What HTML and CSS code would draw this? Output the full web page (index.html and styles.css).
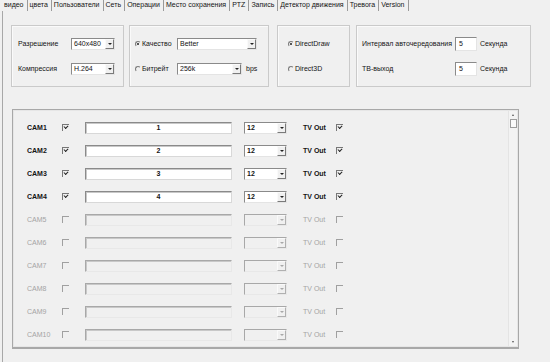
FILE: index.html
```html
<!DOCTYPE html>
<html lang="ru">
<head>
  <meta charset="UTF-8">
  <title>Настройки видео</title>
  <link rel="stylesheet" href="styles.css">
</head>
<body>
  <div class="tabs">
    <span class="tab active">видео</span>
    <span class="tab">цвета</span>
    <span class="tab">Пользователи</span>
    <span class="tab">Сеть</span>
    <span class="tab">Операции</span>
    <span class="tab">Место сохранения</span>
    <span class="tab">PTZ</span>
    <span class="tab">Запись</span>
    <span class="tab">Детектор движения</span>
    <span class="tab">Тревога</span>
    <span class="tab">Version</span>
  </div>

  <div class="frame">
    <div class="top-row">
      <div class="group g-res">
        <div class="line">
          <span class="lbl w53">Разрешение</span>
          <span class="select s44"><span class="val">640x480</span><span class="arrow"></span></span>
        </div>
        <div class="line">
          <span class="lbl w53">Компрессия</span>
          <span class="select s44"><span class="val">H.264</span><span class="arrow"></span></span>
        </div>
      </div>

      <div class="group g-quality">
        <div class="line">
          <span class="radio on"></span>
          <span class="lbl w35">Качество</span>
          <span class="select s80"><span class="val">Better</span><span class="arrow"></span></span>
        </div>
        <div class="line">
          <span class="radio"></span>
          <span class="lbl w35">Битрейт</span>
          <span class="select s65"><span class="val">256k</span><span class="arrow"></span></span>
          <span class="lbl unit">bps</span>
        </div>
      </div>

      <div class="group g-draw">
        <div class="line">
          <span class="radio on"></span>
          <span class="lbl">DirectDraw</span>
        </div>
        <div class="line">
          <span class="radio"></span>
          <span class="lbl">Direct3D</span>
        </div>
      </div>

      <div class="group g-time">
        <div class="line">
          <span class="lbl w93">Интервал авточередования</span>
          <span class="num">5</span>
          <span class="lbl unit">Секунда</span>
        </div>
        <div class="line">
          <span class="lbl w93">ТВ-выход</span>
          <span class="num">5</span>
          <span class="lbl unit">Секунда</span>
        </div>
      </div>
    </div>

    <div class="cams">
      <div class="cam-list">
        <div class="cam">
          <span class="cam-name">CAM1</span><span class="check on"></span>
          <span class="title">1</span>
          <span class="select s43"><span class="val">12</span><span class="arrow"></span></span>
          <span class="tv">TV Out</span><span class="check on"></span>
        </div>
        <div class="cam">
          <span class="cam-name">CAM2</span><span class="check on"></span>
          <span class="title">2</span>
          <span class="select s43"><span class="val">12</span><span class="arrow"></span></span>
          <span class="tv">TV Out</span><span class="check on"></span>
        </div>
        <div class="cam">
          <span class="cam-name">CAM3</span><span class="check on"></span>
          <span class="title">3</span>
          <span class="select s43"><span class="val">12</span><span class="arrow"></span></span>
          <span class="tv">TV Out</span><span class="check on"></span>
        </div>
        <div class="cam">
          <span class="cam-name">CAM4</span><span class="check on"></span>
          <span class="title">4</span>
          <span class="select s43"><span class="val">12</span><span class="arrow"></span></span>
          <span class="tv">TV Out</span><span class="check on"></span>
        </div>
        <div class="cam off">
          <span class="cam-name">CAM5</span><span class="check"></span>
          <span class="title"></span>
          <span class="select s43"><span class="val"></span><span class="arrow"></span></span>
          <span class="tv">TV Out</span><span class="check"></span>
        </div>
        <div class="cam off">
          <span class="cam-name">CAM6</span><span class="check"></span>
          <span class="title"></span>
          <span class="select s43"><span class="val"></span><span class="arrow"></span></span>
          <span class="tv">TV Out</span><span class="check"></span>
        </div>
        <div class="cam off">
          <span class="cam-name">CAM7</span><span class="check"></span>
          <span class="title"></span>
          <span class="select s43"><span class="val"></span><span class="arrow"></span></span>
          <span class="tv">TV Out</span><span class="check"></span>
        </div>
        <div class="cam off">
          <span class="cam-name">CAM8</span><span class="check"></span>
          <span class="title"></span>
          <span class="select s43"><span class="val"></span><span class="arrow"></span></span>
          <span class="tv">TV Out</span><span class="check"></span>
        </div>
        <div class="cam off">
          <span class="cam-name">CAM9</span><span class="check"></span>
          <span class="title"></span>
          <span class="select s43"><span class="val"></span><span class="arrow"></span></span>
          <span class="tv">TV Out</span><span class="check"></span>
        </div>
        <div class="cam off">
          <span class="cam-name">CAM10</span><span class="check"></span>
          <span class="title"></span>
          <span class="select s43"><span class="val"></span><span class="arrow"></span></span>
          <span class="tv">TV Out</span><span class="check"></span>
        </div>
      </div>

      <div class="scrollbar">
        <span class="sb-up"></span>
        <span class="sb-thumb"></span>
        <span class="sb-space"></span>
        <span class="sb-down"></span>
      </div>
    </div>
  </div>
</body>
</html>
```

FILE: styles.css
```css
* {
  box-sizing: border-box;
}

body {
  margin: 0;
  width: 550px;
  height: 362px;
  overflow: hidden;
  background-color: #f0f0f0;
  font-family: "Liberation Sans", Arial, sans-serif;
  font-size: 7px;
  color: #141414;
}

/* tabs */

.tabs {
  display: flex;
  height: 11px;
  padding-left: 2px;
  align-items: stretch;
}

.tab {
  padding: 0 3px 0 2px;
  line-height: 10px;
  border-right: 1px solid #9a9a9a;
  white-space: nowrap;
}

.frame {
  margin-left: 2px;
  height: 351px;
  border-left: 1px solid #a8a8a8;
  padding: 14px 0 0 8px;
}

/* top groups */

.top-row {
  display: flex;
}

.group {
  height: 62px;
  border: 1px solid #cacaca;
  box-shadow: inset 1px 1px 0 #fafafa;
  display: flex;
  flex-direction: column;
  gap: 12px;
  padding-top: 11px;
}

.g-res {
  width: 113px;
  padding-left: 6px;
}

.g-quality {
  width: 140px;
  margin-left: 5px;
  padding-left: 5px;
}

.g-draw {
  width: 73px;
  margin-left: 8px;
  padding-left: 10px;
}

.g-time {
  width: 175px;
  margin-left: 6px;
  padding-left: 5px;
}

.line {
  display: flex;
  align-items: center;
  height: 13px;
  white-space: nowrap;
}

.lbl {
  flex: none;
}

.w53 { width: 53px; }
.w35 { width: 35px; }
.w93 { width: 93px; }

.unit {
  margin-left: 4px;
}

.g-time .unit {
  margin-left: 3px;
}

/* controls */

.select {
  display: flex;
  flex: none;
  height: 12px;
  background-color: #fff;
  border: 1px solid;
  border-color: #8a8a8a #e4e4e4 #e4e4e4 #8a8a8a;
}

.s44 { width: 44px; }
.s80 { width: 80px; }
.s65 { width: 65px; }
.s43 { width: 43px; }

.val {
  flex: 1;
  padding-left: 2px;
  line-height: 10px;
}

.arrow {
  width: 9px;
  border: 1px solid;
  border-color: #fafafa #7a7a7a #7a7a7a #fafafa;
  background-color: #f0f0f0;
  display: flex;
  align-items: center;
  justify-content: center;
}

.arrow::after {
  content: "";
  border-left: 2px solid transparent;
  border-right: 2px solid transparent;
  border-top: 2px solid #222;
}

.num {
  flex: none;
  width: 22px;
  height: 14px;
  padding: 1px 0 0 3px;
  background-color: #fff;
  border: 1px solid;
  border-color: #8a8a8a #e4e4e4 #e4e4e4 #8a8a8a;
  line-height: 9px;
}

.radio {
  flex: none;
  width: 6px;
  height: 6px;
  margin-right: 1px;
  border-radius: 50%;
  border: 1px solid;
  border-color: #7a7a7a transparent transparent #7a7a7a;
  display: flex;
  align-items: center;
  justify-content: center;
}

.radio.on::after {
  content: "";
  width: 2px;
  height: 2px;
  border-radius: 50%;
  background-color: #222;
}

.check {
  flex: none;
  width: 7px;
  height: 7px;
  border-top: 1px solid #777;
  border-left: 1px solid #777;
  position: relative;
}

.check.on::after {
  content: "";
  position: absolute;
  left: 1px;
  top: 0;
  width: 3px;
  height: 2px;
  border-left: 1px solid #222;
  border-bottom: 1px solid #222;
  transform: rotate(-45deg);
}

/* camera list */

.cams {
  display: flex;
  width: 507px;
  height: 240px;
  margin: 22px 0 0 1px;
  border: 1px solid #a8a8a8;
  border-bottom-width: 2px;
  box-shadow: inset 0 0 0 1px #e6e6e6;
}

.cam-list {
  flex: 1;
  padding: 6px 0 0 14px;
}

.cam {
  display: flex;
  align-items: center;
  height: 23px;
  font-weight: bold;
}

.cam-name {
  width: 35px;
}

.title {
  width: 147px;
  height: 12px;
  margin: 0 12px 0 16px;
  text-align: center;
  line-height: 9px;
  background-color: #fff;
  border: 1px solid;
  border-color: #8a8a8a #d8d8d8 #d8d8d8 #8a8a8a;
  box-shadow: inset 1px 1px 0 #c8c8c8;
}

.tv {
  width: 33px;
  margin-left: 16px;
}

.cam.off {
  font-weight: normal;
  color: #a4a4a4;
}

.cam.off .check {
  border-color: #a0a0a0;
}

.cam.off .title,
.cam.off .select {
  background-color: #f0f0f0;
  border-color: #a8a8a8 #e8e8e8 #e8e8e8 #a8a8a8;
}

.cam.off .arrow {
  border-color: #fafafa #b0b0b0 #b0b0b0 #fafafa;
}

.cam.off .arrow::after {
  border-top-color: #a8a8a8;
}

/* scrollbar */

.scrollbar {
  width: 9px;
  margin: 1px 1px 1px 0;
  border-left: 1px solid #e4e4e4;
  background-color: #f3f3f3;
  display: flex;
  flex-direction: column;
  align-items: center;
}

.sb-up,
.sb-down {
  height: 8px;
  display: flex;
  align-items: center;
}

.sb-up::after {
  content: "";
  border-left: 1.5px solid transparent;
  border-right: 1.5px solid transparent;
  border-bottom: 2px solid #555;
}

.sb-down::after {
  content: "";
  border-left: 1.5px solid transparent;
  border-right: 1.5px solid transparent;
  border-top: 2px solid #555;
}

.sb-thumb {
  width: 7px;
  height: 9px;
  background-color: #fafafa;
  border: 1px solid #9c9c9c;
}

.sb-space {
  flex: 1;
}
```
